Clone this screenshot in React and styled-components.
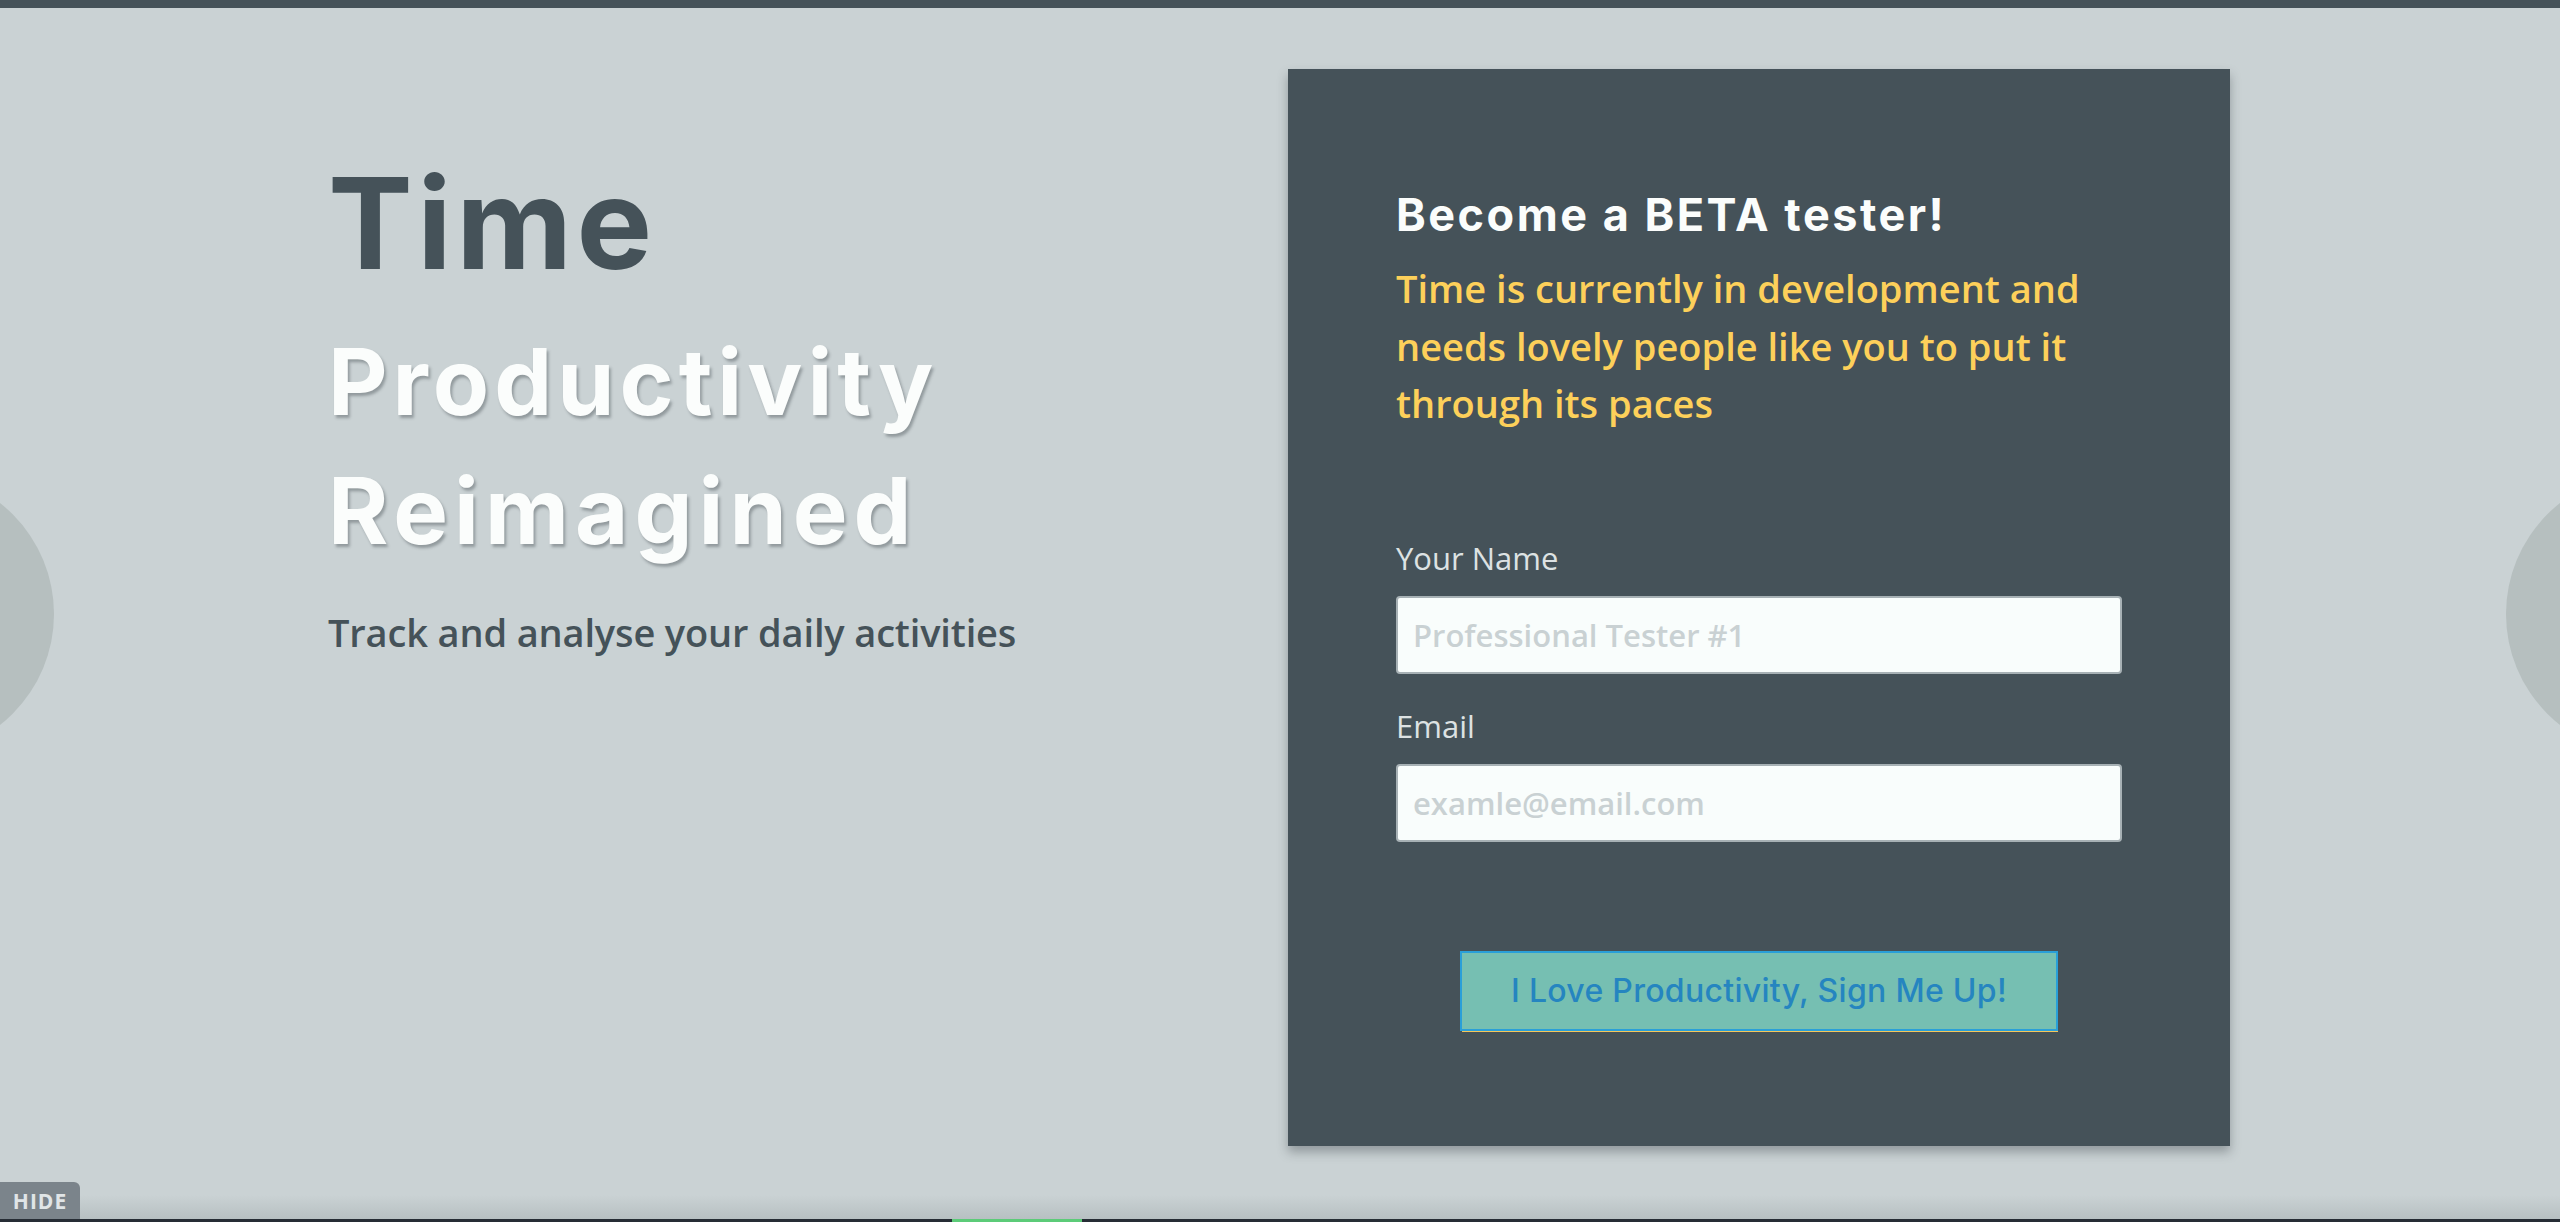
import React from 'react';
import styled, { createGlobalStyle } from 'styled-components';

const GlobalStyle = createGlobalStyle`
  html, body {
    margin: 0;
    padding: 0;
    background: #cad2d4;
  }
  * { box-sizing: border-box; }
`;

const Page = styled.div`
  position: relative;
  height: 1222px;
  overflow: hidden;
  display: flex;
  flex-direction: column;
  background: #cad2d4;
  font-family: "Open Sans", "Noto Sans", sans-serif;
`;

const TopBar = styled.div`
  height: 8px;
  background: #455259;
  flex-shrink: 0;
`;

const NavCircle = styled.div`
  position: absolute;
  top: 473px;
  ${({ side }) => (side === 'left' ? 'left: -228px;' : 'left: 2506px;')}
  width: 282px;
  height: 282px;
  border-radius: 50%;
  background: #b6bfbf;
`;

const Container = styled.div`
  margin: 0 330px 0 328px;
  padding-top: 61px;
  display: flex;
  justify-content: space-between;
  align-items: flex-start;
`;

const Intro = styled.div`
  padding-top: 91px;
`;

const Brand = styled.h1`
  margin: 0;
  font-family: "Inter", sans-serif;
  font-weight: 700;
  font-size: 127px;
  line-height: 127px;
  letter-spacing: 4.5px;
  color: #455259;
`;

const Tagline = styled.h2`
  margin: 30px 0 0;
  font-family: "Inter", sans-serif;
  font-weight: 700;
  font-size: 92px;
  line-height: 129px;
  letter-spacing: 5px;
  color: #fbfdfc;
  text-shadow: 2px 3px 3px rgba(40, 50, 55, 0.35);
`;

const TaglineLine = styled.span`
  display: block;
  letter-spacing: ${({ spacing }) => spacing || '5px'};
`;

const Lead = styled.p`
  margin: 33px 0 0;
  font-size: 38px;
  line-height: 48px;
  font-weight: 600;
  letter-spacing: -0.15px;
  color: #455259;
`;

const SignupCard = styled.div`
  width: 942px;
  padding: 119px 108px 115px;
  background: #455259;
  box-shadow: 0 6px 10px rgba(40, 50, 55, 0.35);
`;

const CardTitle = styled.h3`
  margin: 0;
  font-family: "Inter", sans-serif;
  font-weight: 700;
  font-size: 45px;
  line-height: 54px;
  letter-spacing: 2.5px;
  color: #fbfdfc;
`;

const CardText = styled.p`
  margin: 18px 0 0;
  font-size: 38px;
  line-height: 57.5px;
  font-weight: 600;
  color: #fdd05a;
`;

const Form = styled.form`
  margin-top: 105px;
  display: flex;
  flex-direction: column;
`;

const Field = styled.label`
  display: flex;
  flex-direction: column;
  gap: 18px;
  & + & {
    margin-top: 32px;
  }
`;

const LabelText = styled.span`
  font-size: 31px;
  line-height: 40px;
  font-weight: 400;
  color: #dde2e3;
`;

const Input = styled.input`
  width: 100%;
  height: 78px;
  padding: 0 15px;
  border: 2px solid #a7b1b5;
  border-radius: 4px;
  background: #f9fdfc;
  font-family: "Open Sans", sans-serif;
  font-size: 31px;
  font-weight: 600;
  color: #455259;
  outline: none;
  &::placeholder {
    color: #c9d1d3;
  }
`;

const SubmitButton = styled.button`
  align-self: center;
  margin-top: 109px;
  width: 598px;
  height: 80px;
  border: 2px solid #2a9fd8;
  background: #76bfb2;
  box-shadow: 1px 2px 0 -1px #f4c75b;
  font-family: "Inter", sans-serif;
  font-weight: 500;
  font-size: 32px;
  letter-spacing: 0.3px;
  color: #2585c0;
  cursor: pointer;
`;

const HideTab = styled.div`
  position: absolute;
  left: 0;
  bottom: 3px;
  width: 80px;
  height: 37px;
  display: flex;
  align-items: center;
  justify-content: center;
  background: #7b848b;
  border-radius: 0 6px 0 0;
  font-weight: 700;
  font-size: 21px;
  letter-spacing: 1px;
  color: #e0e5e7;
  z-index: 2;
`;

const Footer = styled.div`
  margin-top: auto;
  flex-shrink: 0;
`;

const Shade = styled.div`
  height: 24px;
  background: linear-gradient(to bottom, rgba(160, 170, 172, 0), rgba(160, 170, 172, 0.45));
`;

const Track = styled.div`
  height: 3px;
  background: #262d35;
  display: flex;
`;

const TrackFill = styled.div`
  margin-left: 952px;
  width: 130px;
  background: #5ccb78;
`;

export default function App() {
  return (
    <>
      <GlobalStyle />
      <Page>
        <TopBar />
        <NavCircle side="left" />
        <NavCircle side="right" />
        <Container>
          <Intro>
            <Brand>Time</Brand>
            <Tagline>
              <TaglineLine>Productivity</TaglineLine>
              <TaglineLine spacing="6px">Reimagined</TaglineLine>
            </Tagline>
            <Lead>Track and analyse your daily activities</Lead>
          </Intro>
          <SignupCard>
            <CardTitle>Become a BETA tester!</CardTitle>
            <CardText>
              Time is currently in development and needs lovely people like you to put it through its paces
            </CardText>
            <Form onSubmit={(e) => e.preventDefault()}>
              <Field>
                <LabelText>Your Name</LabelText>
                <Input type="text" placeholder="Professional Tester #1" />
              </Field>
              <Field>
                <LabelText>Email</LabelText>
                <Input type="email" placeholder="examle@email.com" />
              </Field>
              <SubmitButton type="submit">I Love Productivity, Sign Me Up!</SubmitButton>
            </Form>
          </SignupCard>
        </Container>
        <Footer>
          <Shade />
          <Track>
            <TrackFill />
          </Track>
        </Footer>
        <HideTab>HIDE</HideTab>
      </Page>
    </>
  );
}
